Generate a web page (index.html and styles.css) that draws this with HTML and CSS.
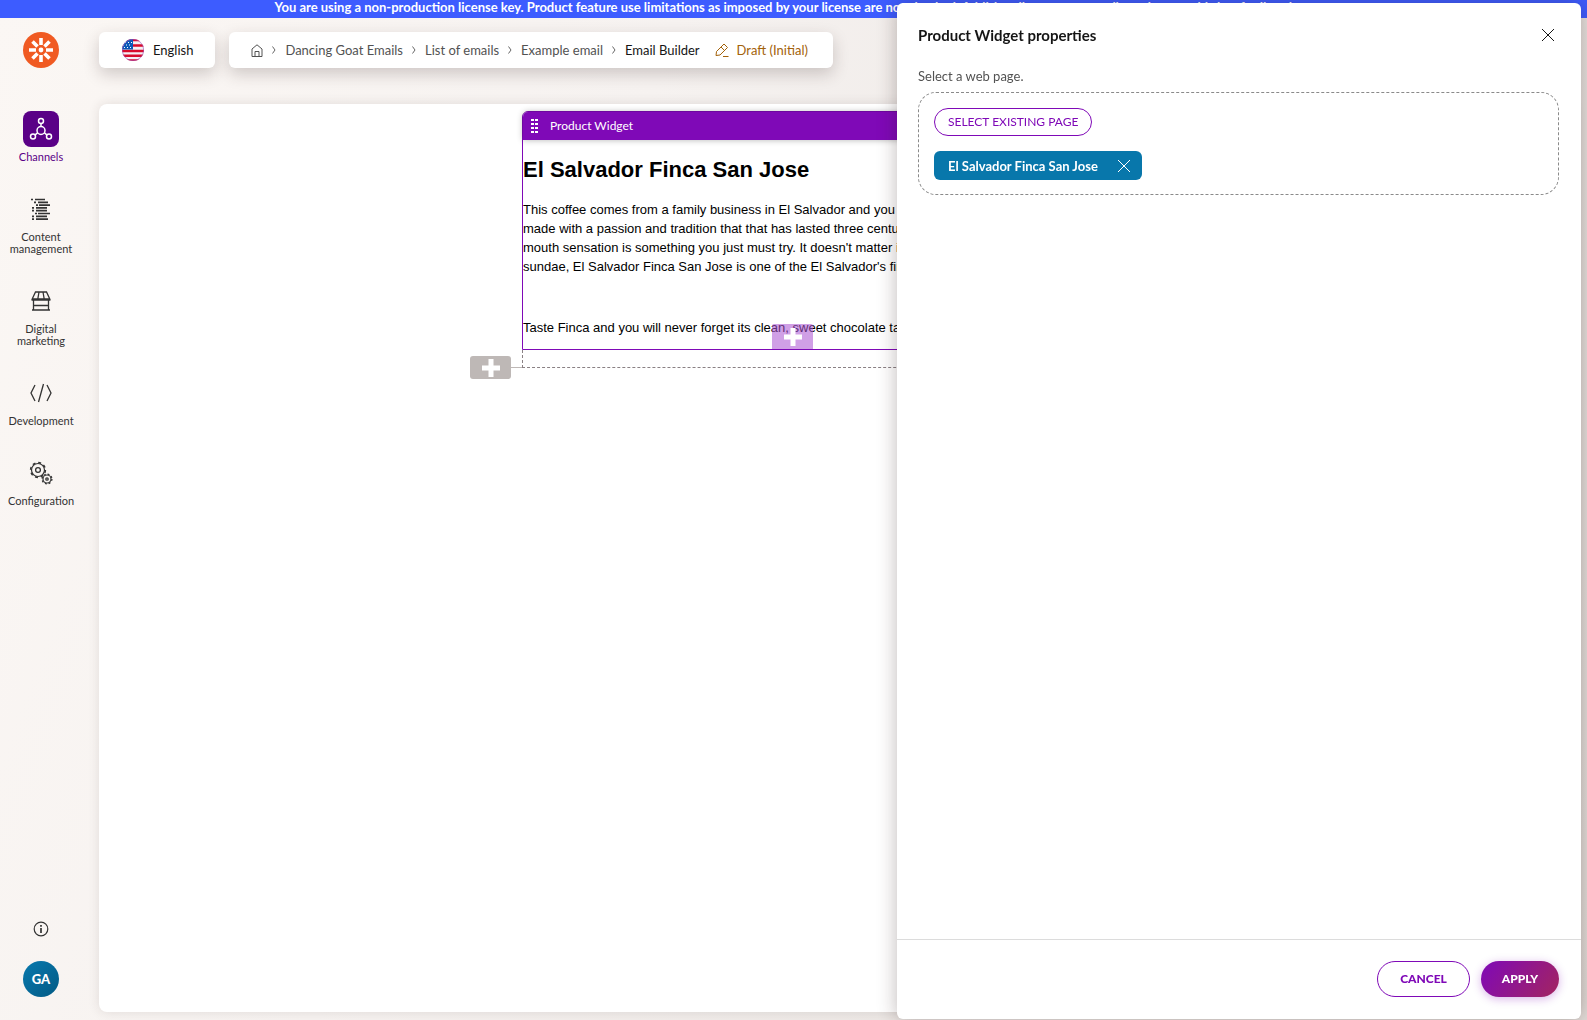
FILE: index.html
```html
<!DOCTYPE html>
<html lang="en">
<head>
<meta charset="utf-8">
<title>Email Builder</title>
<link rel="stylesheet" href="styles.css">
</head>
<body>
<div class="app">
  <div class="license">You are using a non-production license key. Product feature use limitations as imposed by your license are not checked. Additionally, you are not allowed to use this key for live sites.</div>
  <div class="shell">
    <nav class="sidebar" aria-label="Main">
      <a class="logo" href="#" aria-label="Home">
        <svg width="36" height="36" viewBox="0 0 36 36"><circle cx="18" cy="18" r="18" fill="#f05a22"/><circle cx="18" cy="18" r="2.4" fill="#fff"/><g stroke="#fff" stroke-width="3.6"><path d="M18 6v7M18 23v7M6 18h7M23 18h7M9.5 9.5l5 5M21.500 21.500l5 5M26.500 9.500l-5 5M14.500 21.500l-5 5"/></g></svg>
      </a>
      <a class="nav-item active" href="#">
        <span class="nav-icon"><svg width="24" height="24" viewBox="0 0 24 24" fill="none" stroke="currentColor" stroke-width="1.500"><circle cx="12" cy="13.500" r="4"/><circle cx="12" cy="4" r="2.500"/><circle cx="4" cy="19.500" r="2.500"/><circle cx="20" cy="19.500" r="2.500"/><path d="M12 6.500v3M8.600 15.700l-2.400 2.200M15.400 15.700l2.400 2.200"/></svg></span>
        Channels
      </a>
      <a class="nav-item" href="#">
        <span class="nav-icon"><svg width="20" height="22" viewBox="0 0 20 22" stroke="currentColor" stroke-width="1.700"><path d="M0 1.500h2M4 1.500h10M3 4.300h2M7 4.300h10M5 7.100h2M8 7.100h11M1 9.900h2M5 9.900h11M1 12.700h2M5 12.700h11M4 15.500h2M7 15.500h12M1 18.300h2M5 18.300h11M1 21.100h2M5 21.100h12"/></svg></span>
        Content management
      </a>
      <a class="nav-item" href="#">
        <span class="nav-icon"><svg width="20" height="20" viewBox="0 0 20 20" fill="none" stroke="currentColor" stroke-width="1.300"><path d="M4.500 1h11L18.800 8H1.200zM8 1L6.800 8M12 1l1.200 7M2.500 8v11M17.500 8v11M1 19h18M2.500 14.500h15M1.200 8v1h17.600V8"/></svg></span>
        Digital marketing
      </a>
      <a class="nav-item" href="#">
        <span class="nav-icon"><svg width="22" height="20" viewBox="0 0 22 20" fill="none" stroke="currentColor" stroke-width="1.300"><path d="M5 2L1 10l4 8M17 2l4 8-4 8M13.500 1l-5 18"/></svg></span>
        Development
      </a>
      <a class="nav-item" href="#">
        <span class="nav-icon"><svg width="24" height="24" viewBox="0 0 24 24" fill="none" stroke="currentColor"><circle cx="9" cy="9" r="2.400" stroke-width="1.300"/><circle cx="9" cy="9" r="6.500" stroke-width="1.200"/><circle cx="9" cy="9" r="7.400" stroke-width="1.500" stroke-dasharray="2.900 2.912"/><circle cx="18" cy="18" r="1.200" stroke-width="1.300"/><circle cx="18" cy="18" r="4" stroke-width="1.200"/><circle cx="18" cy="18" r="4.900" stroke-width="1.300" stroke-dasharray="1.920 1.928"/></svg></span>
        Configuration
      </a>
      <div class="sidebar-foot">
        <button class="info" type="button" aria-label="Information"><svg width="16" height="16" viewBox="0 0 16 16" fill="none" stroke="currentColor"><circle cx="8" cy="8" r="6.800" stroke-width="1.200"/><path d="M8 7v5M8 4v1.700" stroke-width="1.700"/></svg></button>
        <button class="avatar" type="button">GA</button>
      </div>
    </nav>
    <main class="main">
      <header class="topbar">
        <button class="card language" type="button">
          <svg width="22" height="22" viewBox="0 0 22 22"><defs><clipPath id="round"><circle cx="11" cy="11" r="11"/></clipPath></defs><g clip-path="url(#round)"><path fill="#f4eff5" d="M0 0h22v22H0z"/><path stroke="#d80c2c" stroke-width="2.600" d="M0 1h22M0 6.500h22M0 12h22M0 16.800h22M0 21.500h22"/><path fill="#0b58b8" d="M0 0h11v10.500H0z"/><path stroke="#fff" stroke-dasharray="1 2" d="M3 3.500h8M1 6h9M2 8.500h9"/></g><circle cx="11" cy="11" r="10.700" fill="none" stroke="#a050b8" stroke-width=".6"/></svg>
          English
        </button>
        <nav class="card crumbs" aria-label="Breadcrumb">
          <a href="#" aria-label="Home"><svg width="12" height="13" viewBox="0 0 12 13" fill="none" stroke="currentColor"><path d="M1 5v7.500h10V5L6 .8zM4 12.500v-5h4v5"/></svg></a>
          <svg class="sep" width="4" height="8" viewBox="0 0 4 8"><path d="M.5.500L3 4 .5 7.500"/></svg>
          <a href="#">Dancing Goat Emails</a>
          <svg class="sep" width="4" height="8" viewBox="0 0 4 8"><path d="M.5.500L3 4 .5 7.500"/></svg>
          <a href="#">List of emails</a>
          <svg class="sep" width="4" height="8" viewBox="0 0 4 8"><path d="M.5.500L3 4 .5 7.500"/></svg>
          <a href="#">Example email</a>
          <svg class="sep" width="4" height="8" viewBox="0 0 4 8"><path d="M.5.500L3 4 .5 7.500"/></svg>
          <a class="current" href="#">Email Builder</a>
          <span class="status"><svg width="14" height="14" viewBox="0 0 14 14" fill="none" stroke="currentColor"><path d="M1 12.500l.5-4L9 1l3.500 3.500-7.500 7.500zM6 4l3.500 3.500M8 13.500h5.500"/></svg>Draft (Initial)</span>
        </nav>
      </header>
      <section class="canvas">
        <div class="zone">
          <article class="widget">
            <div class="widget-bar"><svg width="7" height="14" viewBox="0 0 7 14" fill="#fff"><path d="M0 0h3v2H0zM4 0h3v2H4zM0 4h3v2H0zM4 4h3v2H4zM0 8h3v2H0zM4 8h3v2H4zM0 12h3v2H0zM4 12h3v2H4z"/></svg>Product Widget</div>
            <div class="widget-body">
              <h1>El Salvador Finca San Jose</h1>
              <p>This coffee comes from a family business in El Salvador and you can be sure it is<br>made with a passion and tradition that that has lasted three centuries. Its<br>mouth sensation is something you just must try. It doesn't matter if you like a<br>sundae, El Salvador Finca San Jose is one of the El Salvador's finest coffees.</p>
              <p class="note">Taste Finca and you will never forget its clean, sweet chocolate taste.</p>
            </div>
            <button class="add add-widget" type="button" aria-label="Add widget"><svg width="18" height="18" viewBox="0 0 18 18"><path d="M9 0v18M0 9h18" stroke="#fff" stroke-width="5"/></svg></button>
          </article>
          <div class="zone-end"></div>
          <button class="add add-section" type="button" aria-label="Add section"><svg width="18" height="18" viewBox="0 0 18 18"><path d="M9 0v18M0 9h18" stroke="#fff" stroke-width="5"/></svg></button>
        </div>
      </section>
    </main>
  </div>
</div>
<aside class="drawer" role="dialog" aria-labelledby="drawer-title">
  <header class="drawer-head">
    <h2 id="drawer-title">Product Widget properties</h2>
    <button class="close" type="button" aria-label="Close"><svg width="14" height="14" viewBox="0 0 14 14"><path d="M1 1l12 12M13 1L1 13" stroke="currentColor"/></svg></button>
  </header>
  <div class="drawer-body">
    <p class="label" id="page-label">Select a web page.</p>
    <div class="picker" role="group" aria-labelledby="page-label">
      <button class="select-page" type="button">SELECT EXISTING PAGE</button>
      <div class="chip">El Salvador Finca San Jose<button class="remove" type="button" aria-label="Remove"><svg width="14" height="14" viewBox="0 0 14 14"><path d="M1 1l12 12M13 1L1 13" stroke="currentColor"/></svg></button></div>
    </div>
  </div>
  <footer class="drawer-foot">
    <button class="btn cancel" type="button">CANCEL</button>
    <button class="btn apply" type="button">APPLY</button>
  </footer>
</aside>
</body>
</html>
```
FILE: styles.css
```css
* { box-sizing: border-box; }
body { margin: 0; font-family: Lato, "Open Sans", sans-serif; font-size: 13px; line-height: 16px; color: #151515; }
button { margin: 0; padding: 0; border: 0; background: none; font: inherit; color: inherit; cursor: pointer; }
a { color: inherit; text-decoration: none; }
svg { display: block; flex: none; }
h1, h2, p { margin: 0; }

.app { display: flex; flex-direction: column; height: 100vh; overflow: hidden; background: linear-gradient(110deg, #fbf7f4 0%, #f6f2f0 35%, #ebe6e3 70%, #e2dcd8 100%); }
.license { flex: none; height: 18px; background: #3d5cff; color: #fff; font-weight: 700; line-height: 14px; text-align: center; white-space: nowrap; overflow: hidden; }
.shell { display: flex; flex: 1; min-height: 0; }

.sidebar { display: flex; flex-direction: column; align-items: center; width: 82px; padding: 14px 0 23px; color: #333; }
.logo { margin-bottom: 43px; }
.nav-item { display: flex; flex-direction: column; align-items: center; gap: 4px; margin-bottom: 28px; font-size: 11px; line-height: 12px; text-align: center; }
.nav-item.active { color: #5a0087; }
.nav-icon { display: grid; place-items: center; width: 36px; height: 36px; border-radius: 8px; }
.active .nav-icon { background: #5a0087; color: #fff; }
.sidebar-foot { display: flex; flex-direction: column; align-items: center; gap: 24px; margin-top: auto; }
.avatar { width: 36px; height: 36px; border-radius: 50%; background: linear-gradient(135deg, #0879ae, #035a84); color: #fff; font-weight: 900; }

.main { display: flex; flex: 1; flex-direction: column; min-width: 0; padding: 14px 12px 8px 17px; }
.topbar { display: flex; gap: 14px; height: 36px; margin-bottom: 36px; }
.card { display: flex; align-items: center; border-radius: 6px; background: #fff; box-shadow: 0 6px 16px rgba(60, 40, 40, .22); white-space: nowrap; }
.language { gap: 9px; padding: 0 22px 0 23px; }
.crumbs { gap: 9px; padding: 0 25px 0 22px; color: #525252; }
.sep { fill: none; stroke: #666; }
.current { color: #151515; }
.status { display: flex; align-items: center; gap: 8px; margin-left: 6px; color: #a3620a; }
.canvas { flex: 1; border-radius: 8px; background: #fff; box-shadow: 0 0 12px rgba(60, 40, 40, .12); padding-top: 7px; }

.zone { position: relative; width: 630px; margin: 0 auto; color: #000; font-family: "Liberation Sans", Arial, sans-serif; }
.zone-end { height: 18px; border: 1px dashed #8a8184; border-top: 0; }
.widget { position: relative; border: 1px solid #7f09b7; border-radius: 6px 6px 0 0; }
.widget-bar { display: flex; align-items: center; gap: 12px; height: 28px; padding-left: 8px; border-radius: 5px 5px 0 0; background: #7f09b7; color: #fff; box-shadow: 0 0 6px rgba(0, 0, 0, .3); font-family: Lato, sans-serif; font-size: 12px; }
.widget-body { padding: 17px 0 12px; font-size: 13px; line-height: 19px; white-space: nowrap; }
.widget-body h1 { margin-bottom: 17px; font-size: 22px; line-height: 26px; }
.note { margin-top: 42px; }
.add { position: absolute; display: grid; place-items: center; width: 41px; height: 23px; border-radius: 3px; background: #beb8b6; }
.add-widget { left: 249px; bottom: 0; height: 25px; border-radius: 2px 2px 0 0; background: rgba(170, 80, 210, .55); }
.add-section { left: -52px; bottom: -11px; }
.add-section::after { content: ""; position: absolute; left: 41px; top: 11px; width: 11px; border-top: 1px solid #beb8b6; }

.drawer { position: fixed; top: 3px; right: 6px; bottom: 1px; display: flex; flex-direction: column; width: 684px; border-radius: 6px; background: #fff; box-shadow: 0 0 20px rgba(40, 20, 20, .3); }
.drawer-head { display: flex; align-items: center; justify-content: space-between; padding: 22px 26px 20px 21px; }
.drawer-head h2 { font-size: 15px; line-height: 20px; font-weight: 700; }
.drawer-body { flex: 1; padding: 3px 22px 3px 21px; }
.label { margin-bottom: 8px; color: #525252; }
.picker { display: flex; flex-direction: column; align-items: flex-start; gap: 15px; padding: 15px 15px 14px; border: 1px dashed #8a8a8a; border-radius: 18px; }
.select-page { height: 28px; padding: 0 13px; border: 1px solid #7f09b7; border-radius: 14px; color: #7f09b7; font-size: 12px; }
.chip { display: flex; align-items: center; gap: 19px; height: 29px; padding: 0 11px 0 14px; border-radius: 6px; background: #0877ab; color: #fff; font-weight: 700; }
.drawer-foot { display: flex; justify-content: flex-end; gap: 11px; padding: 21px 22px 22px; border-top: 1px solid #dcdcdc; }
.btn { height: 36px; border-radius: 18px; font-size: 12px; font-weight: 900; }
.cancel { width: 93px; border: 1px solid #7f09b7; color: #7f09b7; }
.apply { width: 78px; background: linear-gradient(125deg, #7f09b7, #a32560); color: #fff; box-shadow: 0 2px 10px rgba(127, 9, 183, .3); }
```
